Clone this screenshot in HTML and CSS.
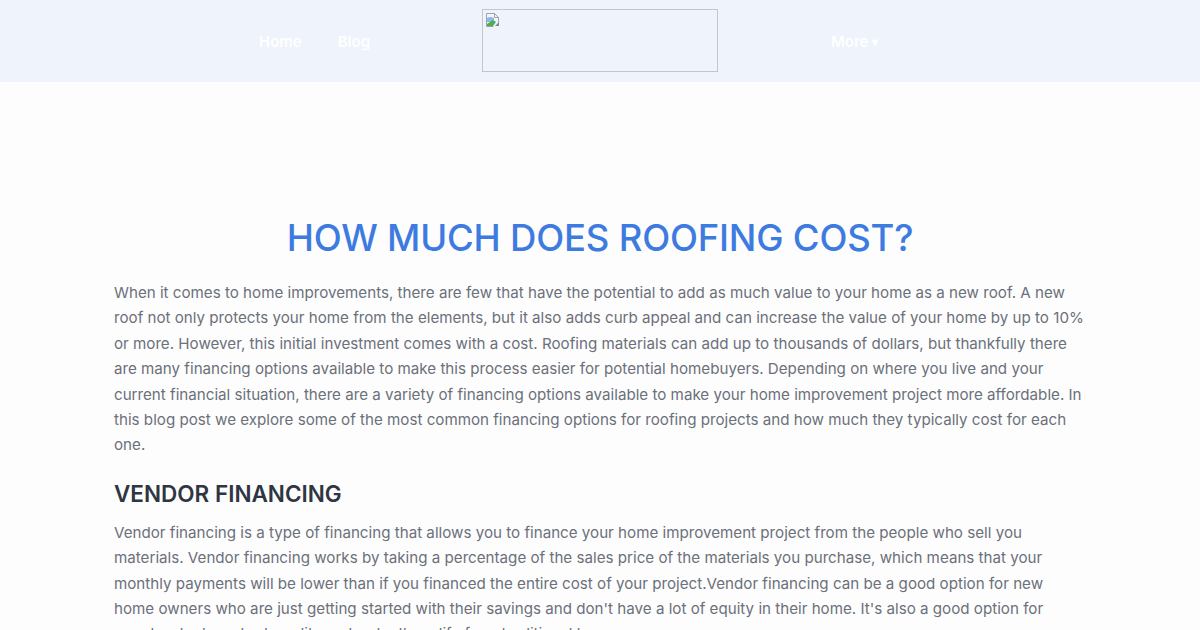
FILE: index.html
```html
<!DOCTYPE html>
<html lang="en">
<head>
    <meta charset="UTF-8">
    <meta name="viewport" content="width=device-width, initial-scale=1.0">
    <title>How Much Does Roofing Cost?</title>
    <link rel="stylesheet" href="styles.css">
</head>
<body>
    <header class="site-header">
        <nav class="nav">
            <div class="nav-left">
                <a href="#" class="nav-link">Home</a>
                <a href="#" class="nav-link">Blog</a>
            </div>
            <div class="logo">
                <svg class="broken-icon" width="16" height="16" viewBox="0 0 16 16">
                    <path d="M1.5 1.5h8l4 4v5" fill="#f4f6fa" stroke="#9aa3b0" stroke-width="1"/>
                    <path d="M1.5 1.5v13h7" fill="none" stroke="#9aa3b0" stroke-width="1"/>
                    <path d="M2 6 q3 -2 7 0 v4 H2z" fill="#8fb8e6"/>
                    <path d="M2 14 L2 12 L8 8 L11 10 L8 14z" fill="#4caf50"/>
                    <path d="M9.5 1.5v4h4" fill="none" stroke="#9aa3b0" stroke-width="1"/>
                    <path d="M10 14 L14 10 V14z" fill="#7d8794"/>
                </svg>
            </div>
            <div class="nav-right">
                <a href="#" class="nav-link">More <span class="caret">&#9662;</span></a>
            </div>
        </nav>
    </header>

    <main class="post">
        <h1 class="post-title">HOW MUCH DOES ROOFING COST?</h1>
        <p>When it comes to home improvements, there are few that have the potential to add as much value to your home as a new roof. A new roof not only protects your home from the elements, but it also adds curb appeal and can increase the value of your home by up to 10% or more. However, this initial investment comes with a cost. Roofing materials can add up to thousands of dollars, but thankfully there are many financing options available to make this process easier for potential homebuyers. Depending on where you live and your current financial situation, there are a variety of financing options available to make your home improvement project more affordable. In this blog post we explore some of the most common financing options for roofing projects and how much they typically cost for each one.</p>

        <h2>VENDOR FINANCING</h2>
        <p>Vendor financing is a type of financing that allows you to finance your home improvement project from the people who sell you materials. Vendor financing works by taking a percentage of the sales price of the materials you purchase, which means that your monthly payments will be lower than if you financed the entire cost of your project.Vendor financing can be a good option for new home owners who are just getting started with their savings and don't have a lot of equity in their home. It's also a good option for people who have bad credit or who don't qualify for a traditional loan.</p>
    </main>
</body>
</html>
```

FILE: styles.css
```css
body {
    margin: 0;
    font-family: Inter, "Open Sans", sans-serif;
    background-color: #fdfdfe;
    color: #6b7079;
}
.site-header {
    background-color: #eef3fc;
    height: 82px;
}
.nav {
    width: 1200px;
    height: 82px;
    display: grid;
    grid-template-columns: 482px 236px 482px;
    align-items: center;
}
.nav-left {
    display: flex;
    gap: 36px;
    padding-left: 259px;
}
.nav-right {
    padding-left: 113px;
}
.nav-link {
    color: #fff;
    text-decoration: none;
    font-size: 15px;
    font-weight: 600;
}
.caret {
    font-size: 12px;
    vertical-align: 1px;
}
.logo {
    align-self: start;
    height: 61px;
    margin-top: 9px;
    border: 1px solid #c2c6cd;
    position: relative;
}
.broken-icon {
    position: absolute;
    top: 2px;
    left: 2px;
}
.post {
    max-width: 972px;
    margin: 0 auto;
    padding-top: 134px;
}
.post-title {
    margin: 0 0 20px;
    text-align: center;
    color: #3d7be0;
    font-size: 36.5px;
    font-weight: 500;
    letter-spacing: -0.2px;
}
.post p {
    margin: 0;
    font-size: 15.17px;
    line-height: 25.4px;
}
.post h2 {
    margin: 22px 0 13px;
    color: #2f3642;
    font-size: 22.5px;
    font-weight: 600;
}
```
